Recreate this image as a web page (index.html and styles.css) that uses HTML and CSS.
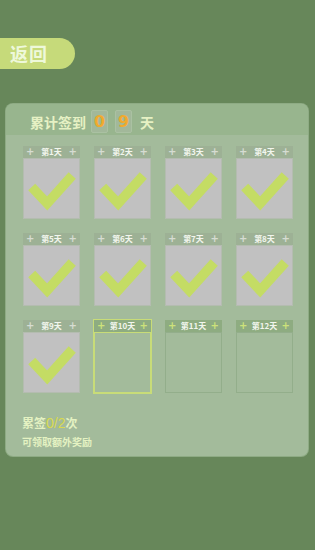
FILE: index.html
```html
<!DOCTYPE html>
<html>
<head>
<meta charset="utf-8">
<link rel="stylesheet" href="styles.css">
</head>
<body>
<div class="back">返回</div>
<div class="panel">
  <div class="panel-head">
    <span class="head-text">累计签到</span>
    <span class="digit">0</span>
    <span class="digit">9</span>
    <span class="head-text day">天</span>
  </div>
  <div class="grid">
    <div class="card done"><div class="label"><span class="plus">+</span><span>第1天</span><span class="plus">+</span></div><div class="box"><svg viewBox="0 0 57 61"><path d="M8 29 L24 46 L50 17" /></svg></div></div>
    <div class="card done"><div class="label"><span class="plus">+</span><span>第2天</span><span class="plus">+</span></div><div class="box"><svg viewBox="0 0 57 61"><path d="M8 29 L24 46 L50 17" /></svg></div></div>
    <div class="card done"><div class="label"><span class="plus">+</span><span>第3天</span><span class="plus">+</span></div><div class="box"><svg viewBox="0 0 57 61"><path d="M8 29 L24 46 L50 17" /></svg></div></div>
    <div class="card done"><div class="label"><span class="plus">+</span><span>第4天</span><span class="plus">+</span></div><div class="box"><svg viewBox="0 0 57 61"><path d="M8 29 L24 46 L50 17" /></svg></div></div>
    <div class="card done"><div class="label"><span class="plus">+</span><span>第5天</span><span class="plus">+</span></div><div class="box"><svg viewBox="0 0 57 61"><path d="M8 29 L24 46 L50 17" /></svg></div></div>
    <div class="card done"><div class="label"><span class="plus">+</span><span>第6天</span><span class="plus">+</span></div><div class="box"><svg viewBox="0 0 57 61"><path d="M8 29 L24 46 L50 17" /></svg></div></div>
    <div class="card done"><div class="label"><span class="plus">+</span><span>第7天</span><span class="plus">+</span></div><div class="box"><svg viewBox="0 0 57 61"><path d="M8 29 L24 46 L50 17" /></svg></div></div>
    <div class="card done"><div class="label"><span class="plus">+</span><span>第8天</span><span class="plus">+</span></div><div class="box"><svg viewBox="0 0 57 61"><path d="M8 29 L24 46 L50 17" /></svg></div></div>
    <div class="card done"><div class="label"><span class="plus">+</span><span>第9天</span><span class="plus">+</span></div><div class="box"><svg viewBox="0 0 57 61"><path d="M8 29 L24 46 L50 17" /></svg></div></div>
    <div class="card todo current"><div class="label"><span class="plus">+</span><span>第10天</span><span class="plus">+</span></div><div class="box"></div></div>
    <div class="card todo"><div class="label"><span class="plus">+</span><span>第11天</span><span class="plus">+</span></div><div class="box"></div></div>
    <div class="card todo"><div class="label"><span class="plus">+</span><span>第12天</span><span class="plus">+</span></div><div class="box"></div></div>
  </div>
  <div class="footer">
    <div class="line1">累签<span class="count">0/2</span>次</div>
    <div class="line2">可领取额外奖励</div>
  </div>
</div>
</body>
</html>
```
FILE: styles.css
```css
html, body {
  margin: 0;
  padding: 0;
}
body {
  width: 315px;
  height: 550px;
  background: #67875a;
  font-family: "Noto Sans CJK SC", "Noto Sans", sans-serif;
  overflow: hidden;
}
.back {
  margin-top: 38px;
  width: 75px;
  height: 31px;
  box-sizing: border-box;
  padding-left: 10px;
  background: #c6da7a;
  border-radius: 0 16px 16px 0;
  color: #eef8da;
  font-size: 18px;
  line-height: 31px;
  font-weight: 700;
  letter-spacing: 1px;
}
.panel {
  margin: 35px 7px 0 6px;
  height: 352px;
  background: #a3bb9b;
  border-radius: 7px;
  box-shadow: 0 0 0 1px #8eab84;
  display: flex;
  flex-direction: column;
  overflow: hidden;
}
.panel-head {
  height: 31px;
  background: #98b58e;
  display: flex;
  align-items: center;
  padding-left: 24px;
  box-sizing: border-box;
  padding-top: 4px;
}
.head-text {
  color: #e6f1c4;
  font-size: 14px;
  font-weight: 700;
}
.digit {
  width: 15px;
  height: 21px;
  margin-left: 5px;
  background: #a2b89a;
  border: 1px solid #aac1a2;
  border-radius: 2px;
  color: #f0aa2e;
  font-family: "DejaVu Sans", sans-serif;
  font-weight: 700;
  font-size: 16px;
  line-height: 21px;
  text-align: center;
}
.digit + .digit {
  margin-left: 7px;
}
.day {
  margin-left: 8px;
}
.grid {
  display: grid;
  grid-template-columns: repeat(4, 57px);
  column-gap: 14px;
  row-gap: 14px;
  padding: 11px 0 0 17px;
}
.card {
  display: flex;
  flex-direction: column;
}
.label {
  height: 12px;
  display: flex;
  justify-content: space-between;
  align-items: center;
  padding: 0 3px;
  font-size: 8px;
  font-weight: 700;
  color: #f2f6ee;
  line-height: 12px;
}
.done .label {
  background: #9db195;
}
.plus {
  font-size: 10px;
  font-weight: 700;
  color: #d6dcd2;
  font-family: "DejaVu Sans", sans-serif;
}
.todo .label {
  background: #8eac81;
}
.todo .plus {
  color: #cde27a;
}
.box {
  height: 61px;
  box-sizing: border-box;
}
.done .box {
  background: #c1c1c1;
  border: 1px solid #b4bcb0;
}
.todo .box {
  border: 1px solid #93ae8b;
}
.current {
  outline: 1px solid #c8dc78;
}
.current .box {
  border: 1px solid #c8dc78;
}
.box svg {
  display: block;
  width: 100%;
  height: 100%;
}
.box path {
  fill: none;
  stroke: #c4dc64;
  stroke-width: 10;
  stroke-linecap: butt;
  stroke-linejoin: miter;
}
.footer {
  padding: 22px 0 0 16px;
  color: #e4f2c2;
  font-weight: 700;
}
.line1 {
  font-size: 12px;
  line-height: 16px;
}
.count {
  color: #dada4e;
  font-family: "Liberation Sans", sans-serif;
  font-weight: 400;
  font-size: 14px;
}
.line2 {
  margin-top: 4px;
  font-size: 10px;
  line-height: 14px;
}
```
